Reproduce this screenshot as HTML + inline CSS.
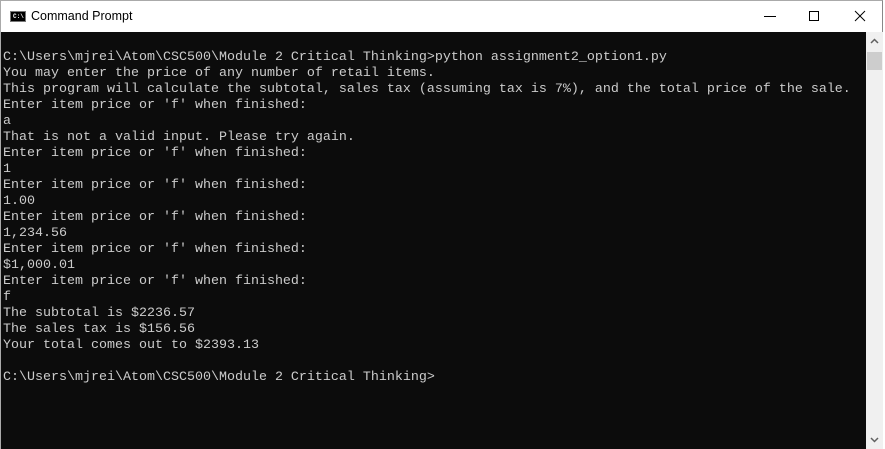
<!DOCTYPE html>
<html><head><style>
body{margin:0;width:885px;height:449px;overflow:hidden;background:#fff;position:relative;font-family:"Liberation Sans",sans-serif}
.frame{position:absolute;left:0;top:0;width:883px;height:449px;border-right:1px solid #888;border-left:1px solid #aaa;border-top:1px solid #aaa;box-sizing:border-box}
.title{position:absolute;left:1px;top:1px;width:881px;height:31px;background:#fff}
.ttl{position:absolute;left:30px;top:8px;font-size:12.5px;color:#000}
.icon{position:absolute;left:9px;top:10px;width:16px;height:11px;background:#000;border:1px solid #777;box-sizing:border-box}
.icon span{position:absolute;left:2px;top:1px;font-size:6px;color:#fff;font-family:"Liberation Mono",monospace;font-weight:bold}
.con{position:absolute;left:1px;top:32px;width:865px;height:417px;background:#0c0c0c}
pre{margin:0;position:absolute;left:2px;top:18px;font-family:"Liberation Mono",monospace;font-size:13.33px;line-height:16px;color:#cccccc}
.sb{position:absolute;left:866px;top:32px;width:17px;height:417px;background:#f0f0f0}
.thumb{position:absolute;left:1px;top:20px;width:15px;height:18px;background:#cdcdcd}
</style></head><body>
<div class="frame"></div>
<div class="title">
<div class="icon"><span>C:\</span></div>
<div class="ttl">Command Prompt</div>
<svg style="position:absolute;left:739px;top:-1px" width="145" height="32">
<line x1="24" y1="16.5" x2="36" y2="16.5" stroke="#000" stroke-width="1"/>
<rect x="69.5" y="11.5" width="9" height="9" fill="none" stroke="#000"/>
<line x1="115" y1="11" x2="125" y2="21" stroke="#000"/>
<line x1="125" y1="11" x2="115" y2="21" stroke="#000"/>
</svg>
</div>
<div class="con"><pre>C:\Users\mjrei\Atom\CSC500\Module 2 Critical Thinking&gt;python assignment2_option1.py
You may enter the price of any number of retail items.
This program will calculate the subtotal, sales tax (assuming tax is 7%), and the total price of the sale.
Enter item price or 'f' when finished:
a
That is not a valid input. Please try again.
Enter item price or 'f' when finished:
1
Enter item price or 'f' when finished:
1.00
Enter item price or 'f' when finished:
1,234.56
Enter item price or 'f' when finished:
$1,000.01
Enter item price or 'f' when finished:
f
The subtotal is $2236.57
The sales tax is $156.56
Your total comes out to $2393.13

C:\Users\mjrei\Atom\CSC500\Module 2 Critical Thinking&gt;</pre></div>
<div class="sb"><div class="thumb"></div>
<svg style="position:absolute;left:0;top:0" width="17" height="417">
<polyline points="5,11 8.5,7.5 12,11" fill="none" stroke="#606060" stroke-width="1.5"/>
<polyline points="5,406 8.5,409.5 12,406" fill="none" stroke="#606060" stroke-width="1.5"/>
</svg></div>
</body></html>
